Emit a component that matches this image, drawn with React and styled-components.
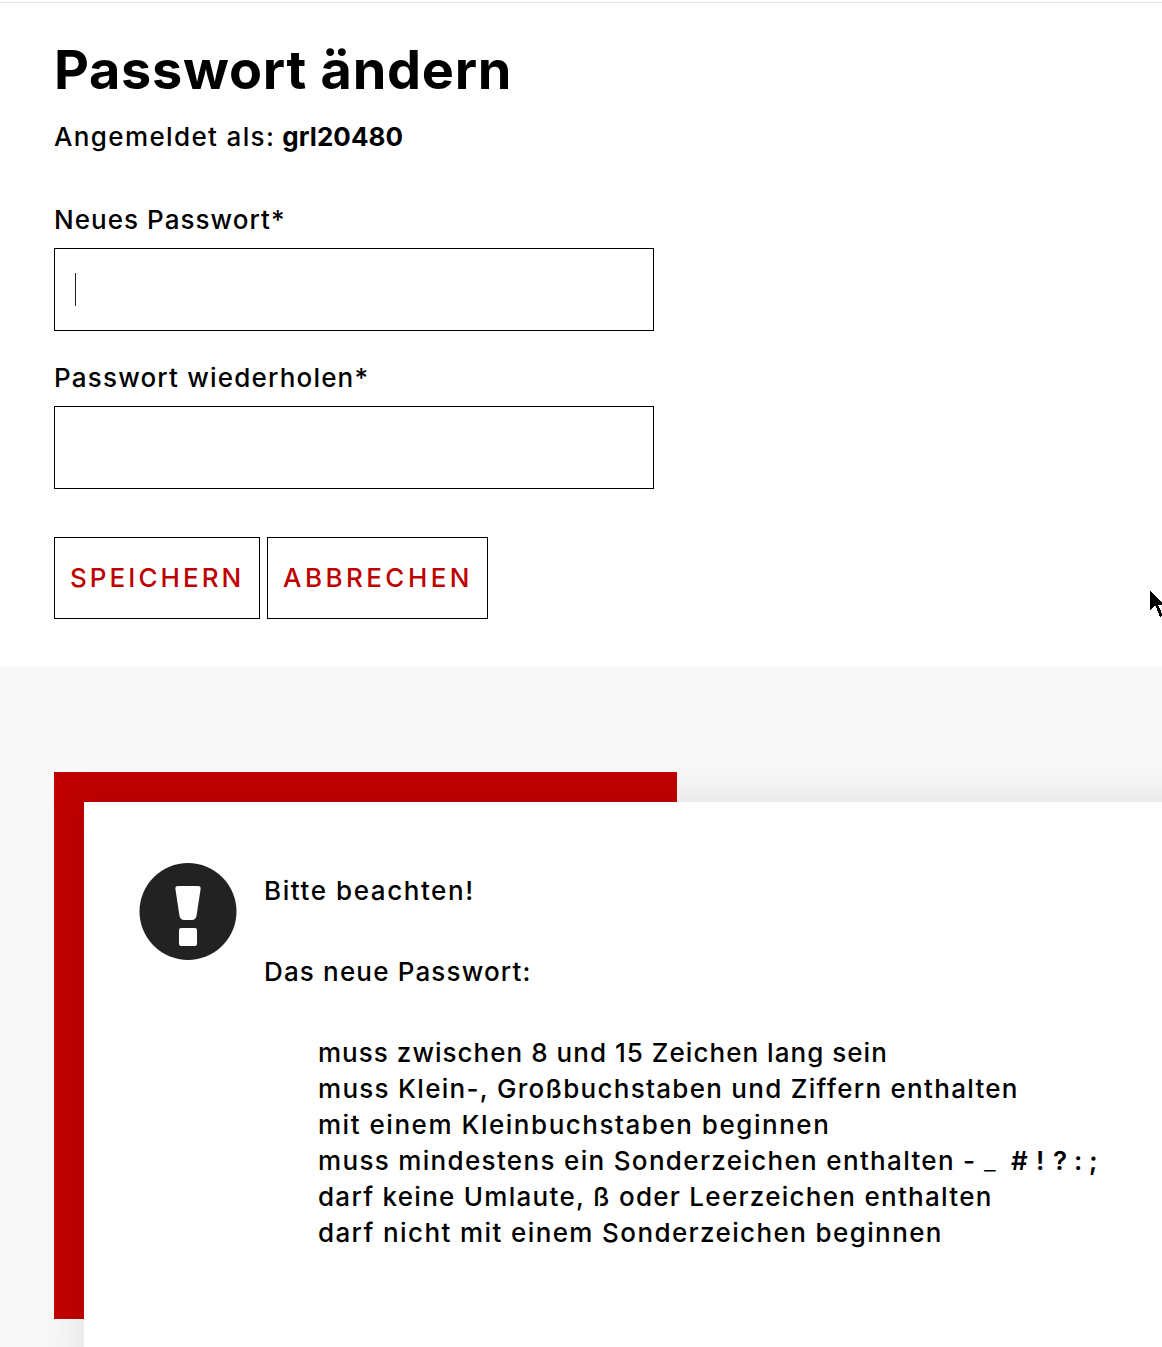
import styled, { createGlobalStyle } from "styled-components";

const GlobalStyle = createGlobalStyle`
  * {
    box-sizing: border-box;
  }

  body {
    margin: 0;
    background: #fff;
    color: #000;
    font-family: Inter, "Liberation Sans", sans-serif;
    font-size: 26px;
    font-weight: 500;
    line-height: 36px;
  }
`;

const Page = styled.div`
  position: relative;
  height: 1347px;
  padding-top: 2px;
  overflow: hidden;
  display: flex;
  flex-direction: column;
`;

const FormSection = styled.form`
  height: 665px;
  flex-shrink: 0;
  border-top: 1px solid #e5e5e5;
  padding: 35px 54px 0;
`;

const Title = styled.h1`
  margin: 0 0 17px;
  font-size: 54px;
  font-weight: 700;
  line-height: 64px;
  letter-spacing: 0.73px;
`;

const Text = styled.span`
  letter-spacing: ${(props) => props.$spacing}px;
  white-space: pre;
`;

const UserLine = styled.p`
  margin: 0 0 47px;
  display: flex;
`;

const UserName = styled.strong`
  margin-left: 7px;
  font-weight: 700;
  letter-spacing: 0.05px;
`;

const FieldGroup = styled.div`
  width: 600px;
  margin-bottom: 29px;
`;

const Label = styled.label`
  display: block;
  margin-bottom: 10px;
`;

const Field = styled.div`
  height: 83px;
  border: 1px solid #000;
  padding: 0 20px;
  display: flex;
  align-items: center;
`;

const Caret = styled.span`
  width: 1px;
  height: 33px;
  background: #222;
`;

const Input = styled.input`
  flex: 1;
  border: none;
  background: none;
  font: inherit;

  &:focus {
    outline: none;
  }
`;

const Buttons = styled.div`
  display: flex;
  gap: 7px;
  margin-top: 48px;
`;

const Button = styled.button`
  width: ${(props) => props.$width}px;
  height: 82px;
  padding: 0 0 0 15px;
  border: 1px solid #000;
  background: #fff;
  color: #be0000;
  font: inherit;
  text-align: left;
  letter-spacing: ${(props) => props.$spacing}px;
`;

const NoteSection = styled.section`
  flex: 1;
  padding: 135px 0 0 84px;
  background: #f8f8f8;
`;

const Note = styled.div`
  position: relative;
  z-index: 0;
  width: 1186px;
  height: 577px;

  &::before {
    content: "";
    position: absolute;
    z-index: -1;
    top: -30px;
    left: -30px;
    width: 623px;
    height: 547px;
    background: #c00000;
  }
`;

const NoteCard = styled.div`
  height: 100%;
  display: flex;
  align-items: flex-start;
  padding: 61px 55px 0;
  background: #fff;
  box-shadow: 0 0 40px rgba(0, 0, 0, 0.11);
`;

const NoteIcon = styled.svg`
  flex-shrink: 0;
  width: 98px;
  height: 98px;
`;

const NoteBody = styled.div`
  margin: 10px 0 0 27px;
`;

const Paragraph = styled.p`
  margin: 0 0 45px;
`;

const Rules = styled.ul`
  margin: 0;
  padding: 0 0 0 54px;
  list-style: none;
`;

const Rule = styled.li`
  display: flex;
`;

const Symbols = styled.span`
  display: flex;
  margin-left: 8px;
`;

const Symbol = styled.span`
  width: ${(props) => props.$width}px;
  font-weight: ${(props) => props.$weight || 500};
`;

const Cursor = styled.svg`
  position: absolute;
  top: 590px;
  left: 1150px;
  width: 12px;
  height: 28px;
`;

const symbols = [
  { char: "-", width: 21 },
  { char: "_", width: 27, weight: 300 },
  { char: "#", width: 25, weight: 600 },
  { char: "!", width: 17, weight: 600 },
  { char: "?", width: 21, weight: 600 },
  { char: ":", width: 15, weight: 600 },
  { char: ";", width: 14, weight: 600 },
];

const rules = [
  { text: "muss zwischen 8 und 15 Zeichen lang sein", spacing: 1.03 },
  { text: "muss Klein-, Großbuchstaben und Ziffern enthalten", spacing: 1.29 },
  { text: "mit einem Kleinbuchstaben beginnen", spacing: 1.53 },
  {
    text: "muss mindestens ein Sonderzeichen enthalten",
    spacing: 1.33,
    symbols: true,
  },
  { text: "darf keine Umlaute, ß oder Leerzeichen enthalten", spacing: 1.28 },
  { text: "darf nicht mit einem Sonderzeichen beginnen", spacing: 1.39 },
];

export default function App() {
  return (
    <>
      <GlobalStyle />
      <Page>
        <FormSection>
          <Title>Passwort ändern</Title>
          <UserLine>
            <Text $spacing={1.37}>Angemeldet als:</Text>
            <UserName>grl20480</UserName>
          </UserLine>
          <FieldGroup>
            <Label htmlFor="password">
              <Text $spacing={1.05}>Neues Passwort*</Text>
            </Label>
            <Field>
              <Caret />
              <Input id="password" type="password" />
            </Field>
          </FieldGroup>
          <FieldGroup>
            <Label htmlFor="repeat">
              <Text $spacing={1.2}>Passwort wiederholen*</Text>
            </Label>
            <Field>
              <Input id="repeat" type="password" />
            </Field>
          </FieldGroup>
          <Buttons>
            <Button type="button" $width={206} $spacing={3.05}>
              SPEICHERN
            </Button>
            <Button type="button" $width={221} $spacing={3.45}>
              ABBRECHEN
            </Button>
          </Buttons>
        </FormSection>
        <NoteSection>
          <Note>
            <NoteCard>
              <NoteIcon viewBox="0 0 98 98">
                <circle cx="49" cy="48.5" r="48.5" fill="#222" />
                <path
                  d="M39 23H59Q62 23 61.6 26L57.5 53Q56.5 57 53 57H45Q41.500 57 40.500 53L36.400 26Q36 23 39 23Z"
                  fill="#fff"
                />
                <rect x="40" y="65" width="18" height="18" rx="2" fill="#fff" />
              </NoteIcon>
              <NoteBody>
                <Paragraph>
                  <Text $spacing={1.58}>Bitte beachten!</Text>
                </Paragraph>
                <Paragraph>
                  <Text $spacing={1.16}>Das neue Passwort:</Text>
                </Paragraph>
                <Rules>
                  {rules.map((rule) => (
                    <Rule key={rule.text}>
                      <Text $spacing={rule.spacing}>{rule.text}</Text>
                      {rule.symbols && (
                        <Symbols>
                          {symbols.map(({ char, width, weight }) => (
                            <Symbol key={char} $width={width} $weight={weight}>
                              {char}
                            </Symbol>
                          ))}
                        </Symbols>
                      )}
                    </Rule>
                  ))}
                </Rules>
              </NoteBody>
            </NoteCard>
          </Note>
        </NoteSection>
        <Cursor viewBox="0 0 12 28" shapeRendering="crispEdges">
          <path d="M0 0L14 14.500H8L13 26L10 27L5.500 16L4 16L0 20Z" />
        </Cursor>
      </Page>
    </>
  );
}
